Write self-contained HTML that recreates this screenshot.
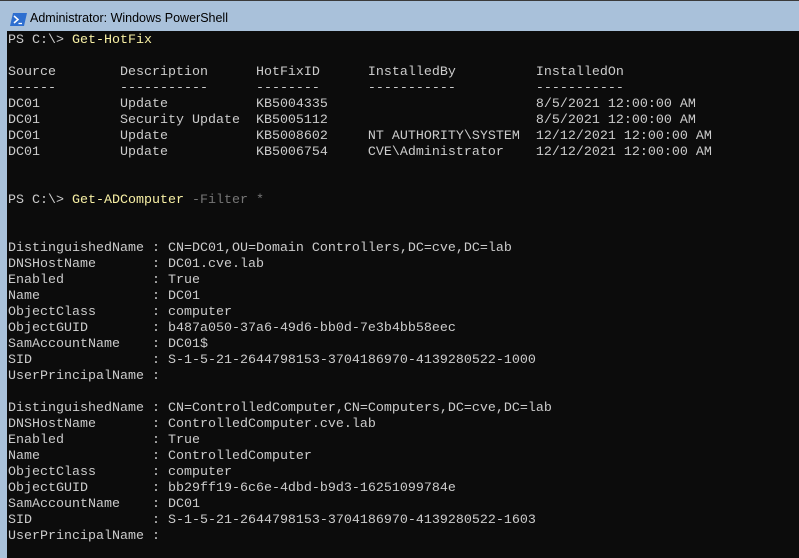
<!DOCTYPE html>
<html><head><meta charset="utf-8"><style>
html,body{margin:0;padding:0;width:799px;height:558px;overflow:hidden;background:#0c0c0c}
.top{position:absolute;left:0;top:0;width:799px;height:1px;background:#3a3a3a}
.title{position:absolute;left:0;top:1px;width:799px;height:30px;background:#a9c1da}
.title span{position:absolute;left:30px;top:10px;font:12.5px "Liberation Sans",sans-serif;color:#000}
.left{position:absolute;left:0;top:31px;width:7px;height:527px;background:#a9c1da}
pre{position:absolute;left:8px;top:33px;margin:0;font-family:"Liberation Mono",monospace;font-size:13.333px;line-height:16px;color:#cccccc}
.y{color:#f9f1a5}.g{color:#767676}
</style></head><body>
<div class="top"></div>
<div class="title">
<svg style="position:absolute;left:10px;top:12px" width="17" height="13" viewBox="0 0 17 13"><polygon points="3,0 17,0 14,13 0,13" fill="#2e6fd0"/><path d="M4 3 L8 6.5 L4 10" stroke="#fff" stroke-width="1.5" fill="none"/><path d="M8.5 10.5 H12" stroke="#fff" stroke-width="1.3"/></svg>
<span>Administrator: Windows PowerShell</span></div>
<div class="left"></div>
<pre>PS C:\&gt; <span class="y">Get-HotFix</span>

Source        Description      HotFixID      InstalledBy          InstalledOn
------        -----------      --------      -----------          -----------
DC01          Update           KB5004335                          8/5/2021 12:00:00 AM
DC01          Security Update  KB5005112                          8/5/2021 12:00:00 AM
DC01          Update           KB5008602     NT AUTHORITY\SYSTEM  12/12/2021 12:00:00 AM
DC01          Update           KB5006754     CVE\Administrator    12/12/2021 12:00:00 AM


PS C:\&gt; <span class="y">Get-ADComputer</span> <span class="g">-Filter *</span>


DistinguishedName : CN=DC01,OU=Domain Controllers,DC=cve,DC=lab
DNSHostName       : DC01.cve.lab
Enabled           : True
Name              : DC01
ObjectClass       : computer
ObjectGUID        : b487a050-37a6-49d6-bb0d-7e3b4bb58eec
SamAccountName    : DC01$
SID               : S-1-5-21-2644798153-3704186970-4139280522-1000
UserPrincipalName :

DistinguishedName : CN=ControlledComputer,CN=Computers,DC=cve,DC=lab
DNSHostName       : ControlledComputer.cve.lab
Enabled           : True
Name              : ControlledComputer
ObjectClass       : computer
ObjectGUID        : bb29ff19-6c6e-4dbd-b9d3-16251099784e
SamAccountName    : DC01
SID               : S-1-5-21-2644798153-3704186970-4139280522-1603
UserPrincipalName :
</pre>
</body></html>
